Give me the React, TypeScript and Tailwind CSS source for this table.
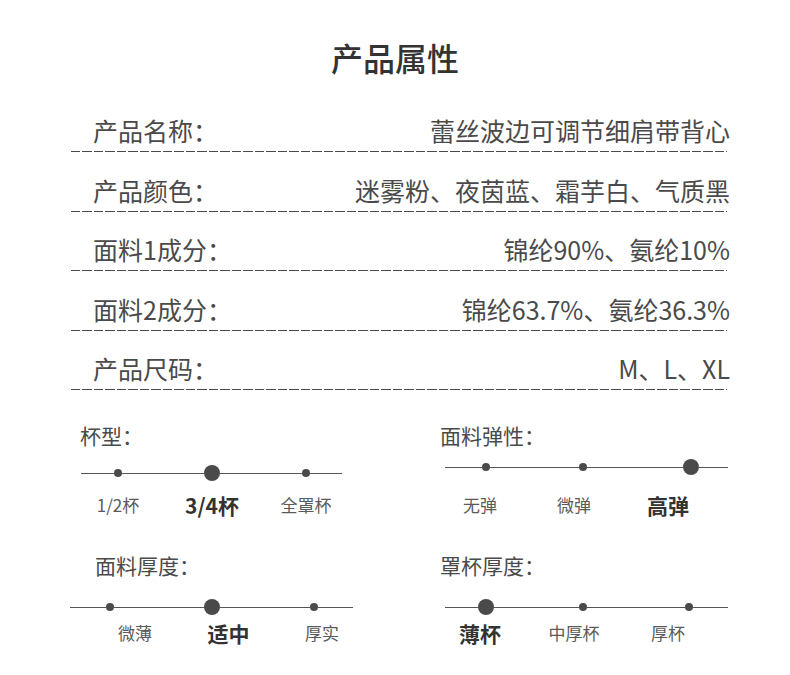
import * as React from "react";

const rows = [
  { label: "产品名称：", value: "蕾丝波边可调节细肩带背心", pad: "pt-[26px]" },
  { label: "产品颜色：", value: "迷雾粉、夜茵蓝、霜芋白、气质黑", pad: "pt-[26px]" },
  { label: "面料1成分：", value: "锦纶90%、氨纶10%", pad: "pt-[25px]" },
  { label: "面料2成分：", value: "锦纶63.7%、氨纶36.3%", pad: "pt-[26px]" },
  { label: "产品尺码：", value: "M、L、XL", pad: "pt-[25px]" },
];

function Seg({ w }: { w: string }) {
  return <div className={`h-px bg-[#555] ${w}`} />;
}

function Dot({ big }: { big?: boolean }) {
  return big ? (
    <div className="size-4 shrink-0 rounded-full bg-[#4a4a4a]" />
  ) : (
    <div className="size-2 shrink-0 rounded-full bg-[#4a4a4a]" />
  );
}

function Labels({ items, className }: { items: { text: string; bold?: boolean }[]; className: string }) {
  return (
    <div className={`flex ${className}`}>
      {items.map((it, i) => (
        <div
          key={i}
          className={
            it.bold
              ? "w-[80px] text-center leading-[24px] text-[21px] font-bold text-[#333]"
              : "w-[80px] text-center leading-[24px] text-[17px] text-[#5a5a5a]"
          }
        >
          {it.text}
        </div>
      ))}
    </div>
  );
}

export default function App() {
  return (
    <div className="w-[790px] h-[675px] bg-white font-['Noto_Sans_CJK_SC','Noto_Sans',sans-serif] overflow-hidden">
      <h1 className="pt-[41px] text-center text-[32px] leading-[32px] font-medium text-[#333]">产品属性</h1>

      <div className="mt-[19px] ml-[71px] w-[656px]">
        {rows.map((r) => (
          <div key={r.label} className={r.pad}>
            <div className="flex justify-between pl-[22px] mr-[-3px] text-[25px] leading-[25px] text-[#4a4a4a]">
              <span>{r.label}</span>
              <span>{r.value}</span>
            </div>
            <div className="mt-[8px] h-px bg-[repeating-linear-gradient(to_right,#4a4a4a_0_9.5px,transparent_9.5px_11.5px)]" />
          </div>
        ))}
      </div>

      <div className="grid grid-cols-[420px_370px] text-[#4a4a4a]">
        {/* 杯型 */}
        <div className="flex flex-col">
          <div className="mt-[35px] ml-[80px] text-[21px] leading-[21px]">杯型：</div>
          <div className="mt-[19px] ml-[81px] flex h-4 items-center">
            <Seg w="w-[33px]" />
            <Dot />
            <Seg w="w-[82px]" />
            <Dot big />
            <Seg w="w-[82px]" />
            <Dot />
            <Seg w="w-[32px]" />
          </div>
          <Labels
            className="mt-[12px] ml-[78px] gap-[14px]"
            items={[{ text: "1/2杯" }, { text: "3/4杯", bold: true }, { text: "全罩杯" }]}
          />
        </div>

        {/* 面料弹性 */}
        <div className="flex flex-col">
          <div className="mt-[35px] ml-[20px] text-[21px] leading-[21px]">面料弹性：</div>
          <div className="mt-[13px] ml-[25px] flex h-4 items-center">
            <Seg w="w-[37px]" />
            <Dot />
            <Seg w="w-[89px]" />
            <Dot />
            <Seg w="w-[96px]" />
            <Dot big />
            <Seg w="w-[29px]" />
          </div>
          <Labels
            className="mt-[18px] ml-[20px] gap-[14px]"
            items={[{ text: "无弹" }, { text: "微弹" }, { text: "高弹", bold: true }]}
          />
        </div>

        {/* 面料厚度 */}
        <div className="flex flex-col">
          <div className="mt-[38px] ml-[95px] text-[21px] leading-[21px]">面料厚度：</div>
          <div className="mt-[23px] ml-[70px] flex h-4 items-center">
            <Seg w="w-[36px]" />
            <Dot />
            <Seg w="w-[90px]" />
            <Dot big />
            <Seg w="w-[90px]" />
            <Dot />
            <Seg w="w-[35px]" />
          </div>
          <Labels
            className="mt-[6px] ml-[95px] gap-[13.5px]"
            items={[{ text: "微薄" }, { text: "适中", bold: true }, { text: "厚实" }]}
          />
        </div>

        {/* 罩杯厚度 */}
        <div className="flex flex-col">
          <div className="mt-[38px] ml-[20px] text-[21px] leading-[21px]">罩杯厚度：</div>
          <div className="mt-[23px] ml-[25px] flex h-4 items-center">
            <Seg w="w-[33px]" />
            <Dot big />
            <Seg w="w-[85px]" />
            <Dot />
            <Seg w="w-[98px]" />
            <Dot />
            <Seg w="w-[35px]" />
          </div>
          <Labels
            className="mt-[6px] ml-[20px] gap-[14px]"
            items={[{ text: "薄杯", bold: true }, { text: "中厚杯" }, { text: "厚杯" }]}
          />
        </div>
      </div>
    </div>
  );
}
